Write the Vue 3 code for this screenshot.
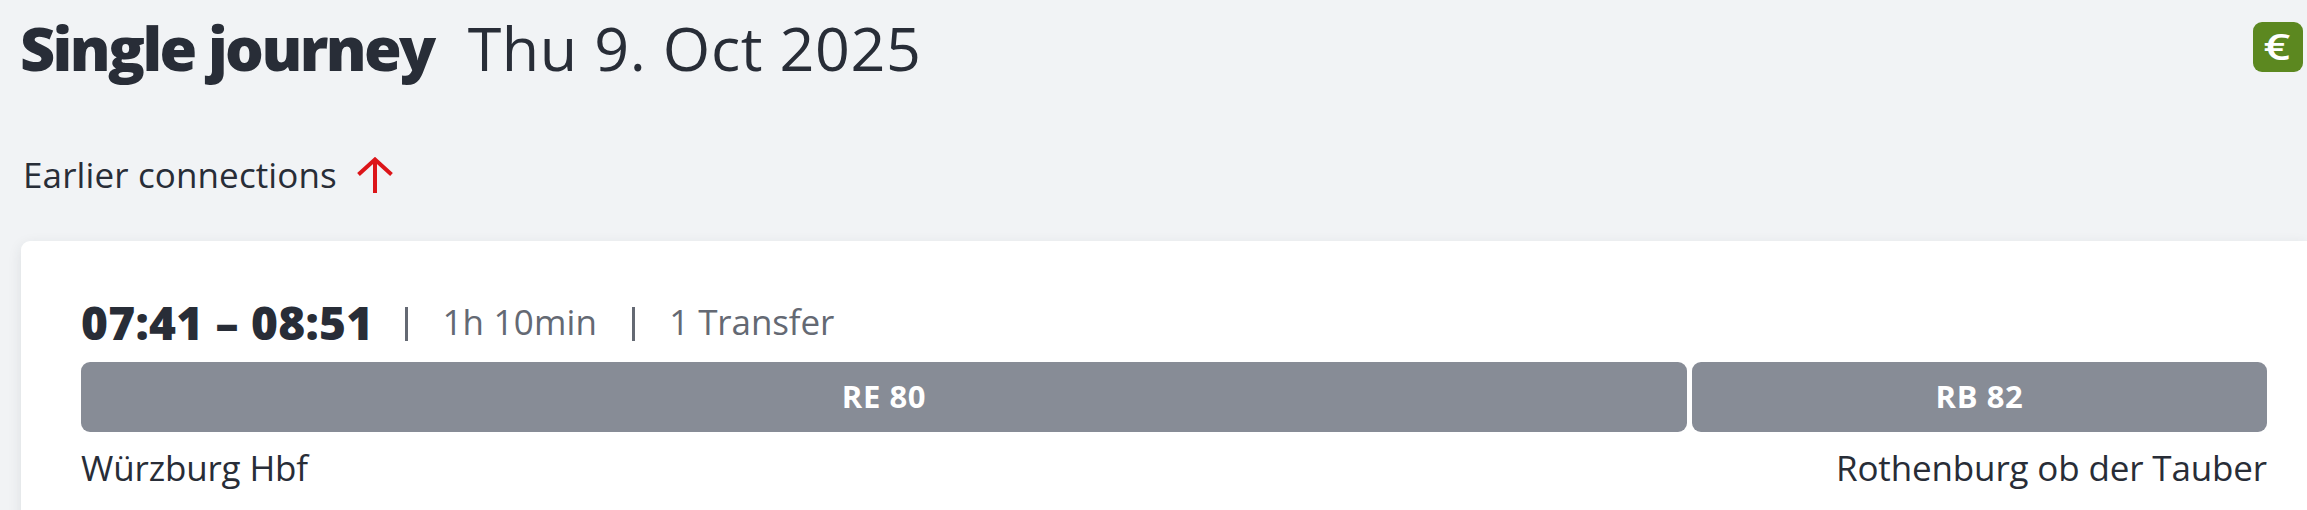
<template>
  <main class="results">
    <header class="results-header">
      <h1>
        <span class="title">Single journey</span>
        <span class="date">Thu 9. Oct 2025</span>
      </h1>
      <span class="price-badge"><span class="euro">€</span></span>
    </header>

    <a class="earlier">
      <span>Earlier connections</span>
      <svg width="36" height="36" viewBox="0 0 36 36" fill="none">
        <path d="M18 36V3M1.5 17.5L18 2.5L34.5 17.5" />
      </svg>
    </a>

    <section class="connection">
      <div class="summary">
        <span class="times">{{ connection.departure }} – {{ connection.arrival }}</span>
        <span class="divider"></span>
        <span class="duration">{{ connection.duration }}</span>
        <span class="divider"></span>
        <span class="transfers">{{ connection.transfers }}</span>
      </div>
      <div class="legs">
        <div v-for="leg in connection.legs" :key="leg.name" class="leg" :style="{ flexGrow: leg.share }">
          <span>{{ leg.name }}</span>
        </div>
      </div>
      <div class="stations">
        <span class="from">{{ connection.from }}</span>
        <span class="to">{{ connection.to }}</span>
      </div>
    </section>
  </main>
</template>

<script setup>
const connection = {
  departure: '07:41',
  arrival: '08:51',
  duration: '1h 10min',
  transfers: '1 Transfer',
  from: 'Würzburg Hbf',
  to: 'Rothenburg ob der Tauber',
  legs: [
    { name: 'RE 80', share: 1606 },
    { name: 'RB 82', share: 575 }
  ]
}
</script>

<style>
body {
  background: #f1f3f5;
  overflow: hidden;
}
</style>

<style scoped>
.results {
  height: 510px;
  box-sizing: border-box;
  padding: 7px 0 0 21px;
  overflow: hidden;
  background: #f1f3f5;
  color: #282d37;
  font-family: 'Open Sans', 'Noto Sans', sans-serif;
}

.results-header {
  display: flex;
  justify-content: space-between;
  align-items: center;
  height: 80px;
  padding-right: 4px;
}

h1 {
  display: flex;
  gap: 34px;
  margin: 0;
  padding-top: 2px;
  font-size: 61px;
  line-height: 80px;
  font-weight: 400;
  white-space: nowrap;
}

.title {
  margin-left: -1px;
  font-weight: 800;
  letter-spacing: -2.6px;
}

.date {
  letter-spacing: 0.6px;
}

.price-badge {
  display: flex;
  align-items: center;
  justify-content: center;
  width: 50px;
  height: 50px;
  border-radius: 9px;
  background: #5c8820;
  color: #fff;
}

.euro {
  padding-right: 2px;
  font-size: 36px;
  font-weight: 600;
  line-height: 48px;
  transform: scaleX(1.3);
}

.earlier {
  display: flex;
  align-items: center;
  gap: 20px;
  height: 50px;
  margin-top: 63px;
  padding-left: 2px;
  font-size: 35px;
  line-height: 50px;
  letter-spacing: 0.12px;
  white-space: nowrap;
}

.earlier path {
  stroke: #dc1519;
  stroke-width: 4;
}

.connection {
  box-sizing: border-box;
  height: 300px;
  margin-top: 41px;
  padding: 52px 40px 0 60px;
  border-radius: 9px 0 0 0;
  background: #fff;
  box-shadow: 0 4px 14px rgba(40, 45, 55, 0.1);
}

.summary {
  display: flex;
  align-items: center;
  height: 58px;
  color: #646973;
  font-size: 35px;
  line-height: 58px;
  white-space: nowrap;
}

.times {
  color: #282d37;
  font-size: 46px;
  font-weight: 800;
  letter-spacing: 0.25px;
}

.duration {
  letter-spacing: 0.2px;
}

.transfers {
  letter-spacing: -0.1px;
}

.divider {
  width: 3px;
  height: 34px;
  margin: 4px 34px 0 32px;
  background: #646973;
}

.duration + .divider {
  margin-left: 35px;
}

.legs {
  display: flex;
  gap: 5px;
  height: 70px;
  margin-top: 11px;
}

.leg {
  display: flex;
  flex-basis: 0;
  align-items: center;
  justify-content: center;
  border-radius: 9px;
  background: #878c96;
  color: #fff;
  font-size: 31px;
  font-weight: 700;
  line-height: 40px;
  letter-spacing: 0.6px;
}

.leg span {
  padding-bottom: 2px;
}

.stations {
  display: flex;
  justify-content: space-between;
  height: 60px;
  margin-top: 6px;
  font-size: 35px;
  line-height: 60px;
  letter-spacing: -0.15px;
  white-space: nowrap;
}
</style>
